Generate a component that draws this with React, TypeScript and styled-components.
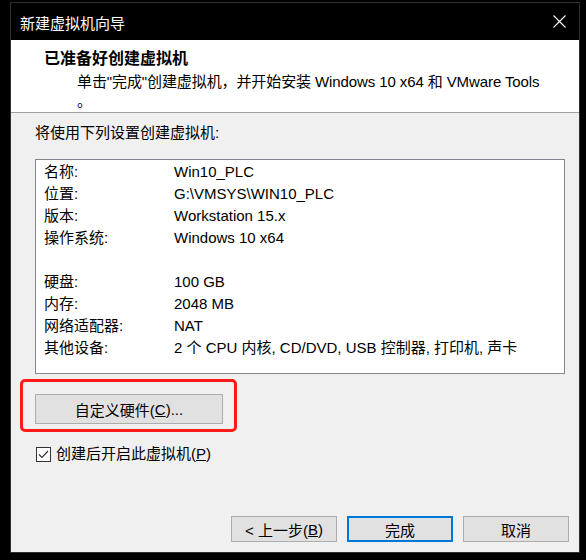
import React from "react";
import styled, { createGlobalStyle } from "styled-components";

const GlobalStyle = createGlobalStyle`
  html, body {
    margin: 0;
    padding: 0;
    background: #000;
  }
  body {
    font-family: "Liberation Sans", "Noto Sans CJK SC", sans-serif;
    font-size: 15px;
    color: #000;
  }
`;

const Window = styled.div`
  margin: 2px 0 0 10px;
  width: 568px;
  border: 1px solid #2e2e2e;
  display: flex;
  flex-direction: column;
`;

const TitleBar = styled.div`
  height: 37px;
  background: #000;
  display: flex;
  align-items: center;
  justify-content: space-between;
  padding: 0 13px 0 9px;
  color: #fff;
  font-size: 15px;
`;

const TitleText = styled.span`
  margin-top: 2px;
`;

const Client = styled.div`
  height: 512px;
  background: #f0f0f0;
  display: flex;
  flex-direction: column;
`;

const Header = styled.div`
  height: 64px;
  background: #fff;
  border-bottom: 1px solid #a0a0a0;
  padding: 8px 0 0 33px;
`;

const HeaderTitle = styled.div`
  font-size: 16px;
  font-weight: bold;
  line-height: 22px;
`;

const HeaderSub = styled.div`
  margin-top: 2px;
  padding-left: 33px;
  line-height: 19px;
  letter-spacing: -0.1px;
`;

const Body = styled.div`
  flex: 1;
  display: flex;
  flex-direction: column;
  padding: 10px 14px 10px 24px;
`;

const Intro = styled.div`
  line-height: 20px;
`;

const ListBox = styled.div`
  margin-top: 16px;
  background: #fff;
  border: 1px solid #828790;
  padding: 1px 0 0 8px;
  box-sizing: border-box;
  height: 215px;
`;

const Row = styled.div`
  display: grid;
  grid-template-columns: 130px 1fr;
  line-height: 22px;
  height: 22px;
  white-space: nowrap;
`;

const Marked = styled.div`
  position: relative;
  margin-top: 20px;
  align-self: flex-start;
`;

const RedMark = styled.div`
  position: absolute;
  left: -15px;
  top: -15px;
  width: 217px;
  height: 53px;
  border: 3px solid #ff1a1a;
  border-radius: 5px;
  box-sizing: border-box;
`;

const Button = styled.button<{ $default?: boolean; $w?: number; $h?: number }>`
  width: ${(p) => p.$w ?? 106}px;
  height: ${(p) => p.$h ?? 26}px;
  margin: 0;
  padding: 0;
  background: #e1e1e1;
  border: ${(p) => (p.$default ? "2px solid #0078d7" : "1px solid #adadad")};
  font-family: inherit;
  font-size: 15px;
  color: #000;
  display: flex;
  align-items: center;
  justify-content: center;
`;

const CheckRow = styled.label`
  margin-top: 22px;
  display: flex;
  align-items: center;
  gap: 5px;
  margin-left: 1px;
  line-height: 16px;
`;

const Box = styled.span`
  width: 13px;
  height: 13px;
  border: 1px solid #333;
  background: #fff;
  display: flex;
  align-items: center;
  justify-content: center;
`;

const Footer = styled.div`
  margin-top: auto;
  display: flex;
  justify-content: flex-end;
  gap: 10px;
  margin-right: -4px;
`;

const U = styled.span`
  text-decoration: underline;
`;

const rows: [string, string][] = [
  ["名称:", "Win10_PLC"],
  ["位置:", "G:\\VMSYS\\WIN10_PLC"],
  ["版本:", "Workstation 15.x"],
  ["操作系统:", "Windows 10 x64"],
  ["", ""],
  ["硬盘:", "100 GB"],
  ["内存:", "2048 MB"],
  ["网络适配器:", "NAT"],
  ["其他设备:", "2 个 CPU 内核, CD/DVD, USB 控制器, 打印机, 声卡"],
];

const App = () => {
  return (
    <>
      <GlobalStyle />
      <Window>
        <TitleBar>
          <TitleText>新建虚拟机向导</TitleText>
          <svg width="13" height="13" viewBox="0 0 13 13">
            <path d="M0.5 0.5 L12.5 12.5 M12.5 0.5 L0.5 12.5" stroke="#fff" strokeWidth="1.1" />
          </svg>
        </TitleBar>
        <Client>
          <Header>
            <HeaderTitle>已准备好创建虚拟机</HeaderTitle>
            <HeaderSub>
              单击"完成"创建虚拟机，并开始安装 Windows 10 x64 和 VMware Tools
              <br />。
            </HeaderSub>
          </Header>
          <Body>
            <Intro>将使用下列设置创建虚拟机:</Intro>
            <ListBox>
              {rows.map(([label, value], i) => (
                <Row key={i}>
                  <span>{label}</span>
                  <span>{value}</span>
                </Row>
              ))}
            </ListBox>
            <Marked>
              <Button $w={188} $h={30}>
                自定义硬件(<U>C</U>)...
              </Button>
              <RedMark />
            </Marked>
            <CheckRow>
              <Box>
                <svg width="11" height="11" viewBox="0 0 11 11">
                  <path d="M1 5.5 L4 8.5 L10 2" fill="none" stroke="#333" strokeWidth="1.2" />
                </svg>
              </Box>
              <span>
                创建后开启此虚拟机(<U>P</U>)
              </span>
            </CheckRow>
            <Footer>
              <Button>
                &lt; 上一步(<U>B</U>)
              </Button>
              <Button $default>完成</Button>
              <Button>取消</Button>
            </Footer>
          </Body>
        </Client>
      </Window>
    </>
  );
};

export default App;
